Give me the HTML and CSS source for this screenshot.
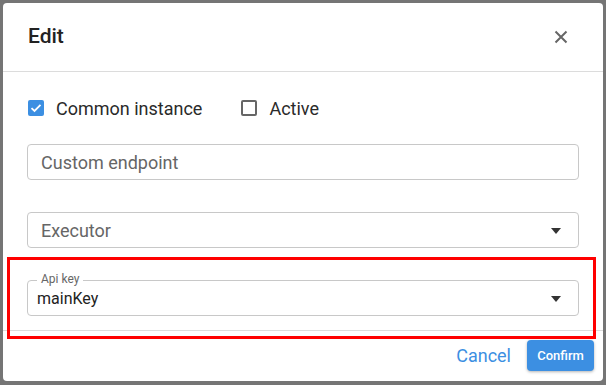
FILE: index.html
```html
<!DOCTYPE html>
<html>
<head>
<meta charset="utf-8">
<link rel="stylesheet" href="styles.css">
</head>
<body>
<div class="dialog">
  <div class="header">
    <div class="title">Edit</div>
    <svg class="close" width="14" height="14" viewBox="0 0 14 14"><path d="M1.5 1.5 L12.5 12.5 M12.5 1.5 L1.5 12.5" stroke="#666" stroke-width="2" fill="none"/></svg>
  </div>
  <div class="body">
    <div class="checks">
      <label class="check">
        <span class="box checked"><svg width="16" height="16" viewBox="0 0 16 16"><path d="M3.5 8.2 L6.5 11 L12.5 4.8" stroke="#fff" stroke-width="1.8" fill="none"/></svg></span>
        <span class="label">Common instance</span>
      </label>
      <label class="check">
        <span class="box"></span>
        <span class="label">Active</span>
      </label>
    </div>
    <div class="field input">
      <span class="placeholder">Custom endpoint</span>
    </div>
    <div class="field select">
      <span class="placeholder">Executor</span>
      <span class="caret"></span>
    </div>
    <div class="field select outlined">
      <span class="legend">Api key</span>
      <span class="value">mainKey</span>
      <span class="caret"></span>
    </div>
  </div>
  <div class="footer">
    <span class="cancel">Cancel</span>
    <span class="confirm">Confirm</span>
  </div>
  <div class="highlight"></div>
</div>
</body>
</html>
```

FILE: styles.css
```css
html, body {
  margin: 0;
  padding: 0;
}
body {
  background: #757575;
  width: 606px;
  height: 385px;
  overflow: hidden;
  font-family: Roboto, "Liberation Sans", sans-serif;
}
.dialog {
  position: relative;
  margin: 3px;
  width: 600px;
  height: 378px;
  background: #fff;
  border-radius: 4px;
  display: flex;
  flex-direction: column;
}
.header {
  height: 68px;
  border-bottom: 1px solid #dcdcdc;
  display: flex;
  align-items: center;
  justify-content: space-between;
  padding: 0 35px 0 25px;
}
.title {
  font-size: 21px;
  font-weight: 500;
  color: #222;
  margin-top: -2px;
}
.close {
  margin-top: 0px;
}
.body {
  padding: 0 24px;
  display: flex;
  flex-direction: column;
  border-bottom: 1px solid #dcdcdc;
  height: 259px;
  box-sizing: border-box;
}
.checks {
  display: flex;
  align-items: center;
  height: 16px;
  margin-top: 28px;
  gap: 38px;
}
.check {
  display: flex;
  align-items: center;
  gap: 12px;
}
.box {
  width: 16px;
  height: 16px;
  box-sizing: border-box;
  border: 2px solid #666;
  border-radius: 2px;
  margin-left: 1px;
}
.box.checked {
  border: none;
  background: #3c8fe2;
  display: flex;
}
.label {
  font-size: 18px;
  color: #2a2a2a;
}
.field {
  position: relative;
  height: 36px;
  box-sizing: border-box;
  border: 1px solid #c8c8c8;
  border-radius: 4px;
  display: flex;
  align-items: center;
  padding-left: 13px;
  font-size: 18px;
}
.input {
  margin-top: 28px;
}
.select {
  margin-top: 32px;
}
.outlined {
  margin-top: 32px;
  padding-left: 9px;
}
.placeholder {
  color: #666;
}
.value {
  color: #222;
  font-size: 16px;
  margin-top: 1px;
}
.legend {
  position: absolute;
  left: 9px;
  top: -10px;
  padding: 0 4px;
  background: #fff;
  font-size: 12px;
  color: #666;
  line-height: 16px;
}
.caret {
  position: absolute;
  right: 17px;
  top: 15px;
  width: 0;
  height: 0;
  border-left: 5px solid transparent;
  border-right: 5px solid transparent;
  border-top: 6px solid #333;
}
.footer {
  display: flex;
  justify-content: flex-end;
  align-items: center;
  padding: 9px 9px 0 0;
  gap: 16px;
}
.cancel {
  font-size: 18px;
  color: #3c8fe2;
}
.confirm {
  background: #3c8fe2;
  color: #fff;
  font-size: 13px;
  font-weight: 500;
  height: 31px;
  width: 67px;
  display: flex;
  align-items: center;
  justify-content: center;
  border-radius: 4px;
  box-shadow: 0 1px 3px rgba(0,0,0,0.3);
}
.highlight {
  position: absolute;
  left: 4px;
  top: 254px;
  width: 583px;
  height: 76px;
  border: 3px solid #f00;
}
```
